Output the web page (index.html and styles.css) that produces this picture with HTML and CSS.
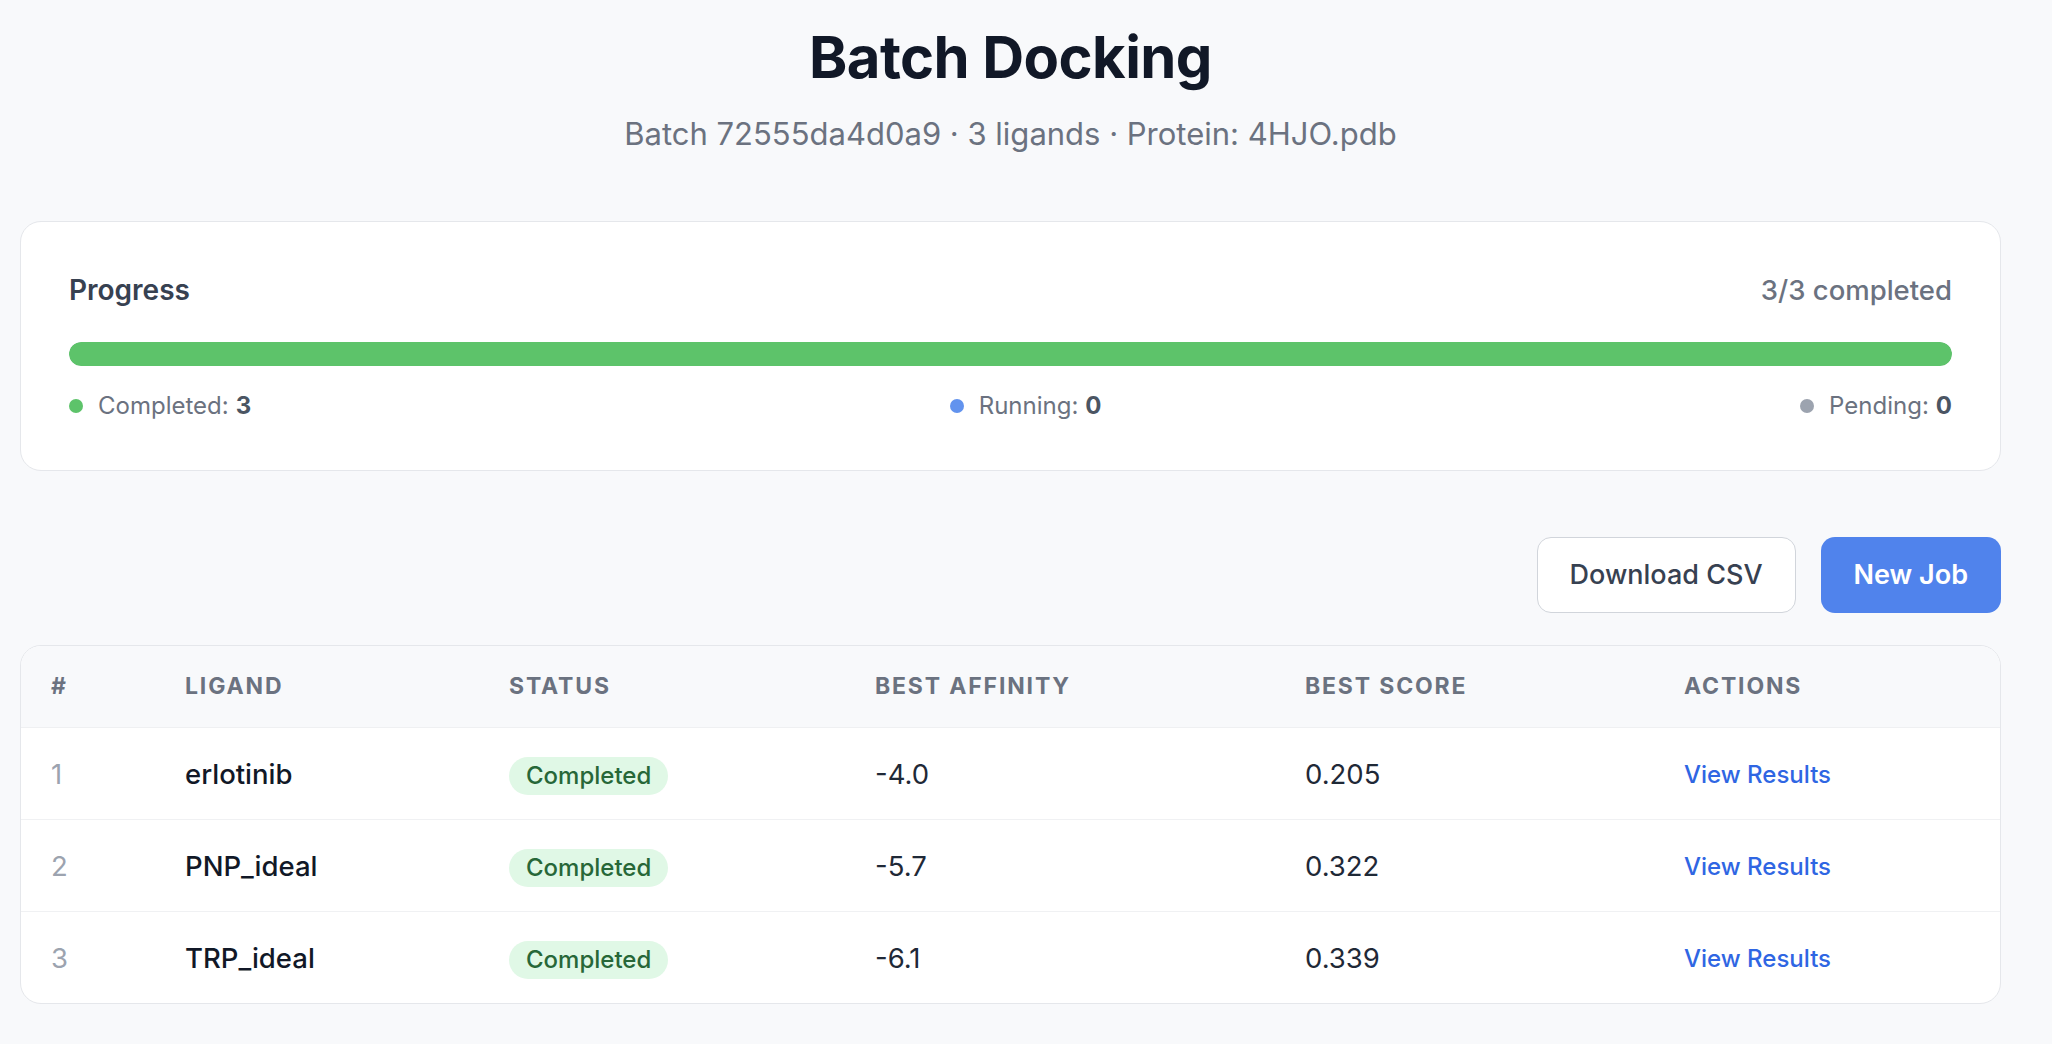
FILE: index.html
```html
<!DOCTYPE html>
<html lang="en">
<head>
    <meta charset="UTF-8">
    <meta name="viewport" content="width=device-width, initial-scale=1.0">
    <title>Batch Docking</title>
    <link rel="stylesheet" href="styles.css">
</head>
<body>
    <div class="page">
        <!-- Header -->
        <header class="page-header">
            <h1 class="page-title">Batch Docking</h1>
            <p class="page-subtitle">Batch 72555da4d0a9 · 3 ligands · Protein: 4HJO.pdb</p>
        </header>

        <!-- Progress card -->
        <section class="card progress-card">
            <div class="progress-head">
                <span class="progress-label">Progress</span>
                <span class="progress-count">3/3 completed</span>
            </div>
            <div class="progress-track">
                <div class="progress-fill" style="width: 100%"></div>
            </div>
            <div class="progress-legend">
                <span class="legend-item"><span class="dot dot-done"></span>Completed: <b>3</b></span>
                <span class="legend-item"><span class="dot dot-running"></span>Running: <b>0</b></span>
                <span class="legend-item"><span class="dot dot-pending"></span>Pending: <b>0</b></span>
            </div>
        </section>

        <!-- Actions -->
        <div class="toolbar">
            <button class="btn btn-outline">Download CSV</button>
            <button class="btn btn-primary">New Job</button>
        </div>

        <!-- Results table -->
        <section class="card table-card">
            <table class="results">
                <thead>
                    <tr>
                        <th class="col-num">#</th>
                        <th class="col-ligand">Ligand</th>
                        <th class="col-status">Status</th>
                        <th class="col-affinity">Best Affinity</th>
                        <th class="col-score">Best Score</th>
                        <th class="col-actions">Actions</th>
                    </tr>
                </thead>
                <tbody>
                    <tr>
                        <td class="num">1</td>
                        <td class="ligand">erlotinib</td>
                        <td><span class="badge">Completed</span></td>
                        <td>-4.0</td>
                        <td>0.205</td>
                        <td><a class="link" href="#">View Results</a></td>
                    </tr>
                    <tr>
                        <td class="num">2</td>
                        <td class="ligand">PNP_ideal</td>
                        <td><span class="badge">Completed</span></td>
                        <td>-5.7</td>
                        <td>0.322</td>
                        <td><a class="link" href="#">View Results</a></td>
                    </tr>
                    <tr>
                        <td class="num">3</td>
                        <td class="ligand">TRP_ideal</td>
                        <td><span class="badge">Completed</span></td>
                        <td>-6.1</td>
                        <td>0.339</td>
                        <td><a class="link" href="#">View Results</a></td>
                    </tr>
                </tbody>
            </table>
        </section>
    </div>
</body>
</html>
```

FILE: styles.css
```css
* {
    box-sizing: border-box;
}

body {
    margin: 0;
    background-color: #f8f9fb;
    font-family: Inter, "Noto Sans", sans-serif;
    color: #1f2937;
}

.page {
    padding: 22px 51px 40px 20px;
}

.page-header {
    text-align: center;
}

.page-title {
    margin: 0;
    font-size: 58px;
    line-height: 70px;
    font-weight: 700;
    color: #111827;
    letter-spacing: -0.01em;
}

.page-subtitle {
    margin: 19px 0 0;
    font-size: 31px;
    line-height: 45px;
    color: #6b7280;
}

.card {
    background-color: #fff;
    border: 1.5px solid #e5e7eb;
    border-radius: 21px;
}

.progress-card {
    margin-top: 65px;
    padding: 48px;
}

.progress-head {
    display: flex;
    justify-content: space-between;
    align-items: center;
    font-size: 28px;
    line-height: 40px;
}

.progress-label {
    font-weight: 600;
    color: #374151;
}

.progress-count {
    font-size: 27.5px;
    font-weight: 500;
    color: #6b7280;
}

.progress-track {
    margin-top: 32px;
    height: 24px;
    border-radius: 12px;
    background-color: #e5e7eb;
    overflow: hidden;
}

.progress-fill {
    height: 100%;
    border-radius: 12px;
    background-color: #5dc36a;
}

.progress-legend {
    display: flex;
    justify-content: space-between;
    margin-top: 24px;
    font-size: 24px;
    line-height: 32px;
    color: #6b7280;
}

.legend-item {
    display: flex;
    align-items: center;
}

.legend-item b {
    margin-left: 7px;
    font-weight: 700;
    color: #4b5563;
}

.dot {
    width: 14px;
    height: 14px;
    border-radius: 50%;
    margin-right: 15px;
}

.dot-done { background-color: #5dc36a; }
.dot-running { background-color: #6293ee; }
.dot-pending { background-color: #9ca3af; }

.toolbar {
    display: flex;
    justify-content: flex-end;
    gap: 25px;
    margin-top: 66px;
}

.btn {
    font-family: inherit;
    font-size: 27px;
    line-height: 40px;
    font-weight: 500;
    padding: 17px 32px;
    border-radius: 14px;
    border: 1.5px solid transparent;
    cursor: pointer;
}

.btn-outline {
    background-color: #fff;
    border-color: #d1d5db;
    color: #374151;
}

.btn-primary {
    background-color: #5083ec;
    color: #fff;
    font-weight: 600;
}

.table-card {
    margin-top: 32px;
    overflow: hidden;
}

.results {
    width: 100%;
    border-collapse: collapse;
    table-layout: fixed;
}

.results th {
    text-align: left;
    padding: 24px 30px 25px;
    font-size: 23px;
    line-height: 32px;
    font-weight: 700;
    letter-spacing: 0.08em;
    text-transform: uppercase;
    color: #6b7280;
    background-color: #f8f9fb;
    border-bottom: 1.5px solid #eff0f2;
}

.col-num { width: 134px; }
.col-ligand { width: 324px; }
.col-status { width: 366px; }
.col-affinity { width: 430px; }
.col-score { width: 379px; }

.results td {
    padding: 25px 30px 24px;
    font-size: 27.5px;
    line-height: 40px;
    color: #1f2937;
    border-bottom: 1.5px solid #f0f1f3;
}

.results tbody tr:last-child td {
    border-bottom: none;
}

.results td.num {
    color: #9ca3af;
}

.results td.ligand {
    font-weight: 500;
    color: #111827;
}

.badge {
    display: inline-block;
    padding: 2px 17px;
    border-radius: 20px;
    font-size: 24px;
    line-height: 34px;
    font-weight: 500;
    color: #276738;
    background-color: #e0f8e6;
    vertical-align: middle;
}

.link {
    font-size: 24px;
    font-weight: 500;
    color: #2f66e3;
    text-decoration: none;
}
```
